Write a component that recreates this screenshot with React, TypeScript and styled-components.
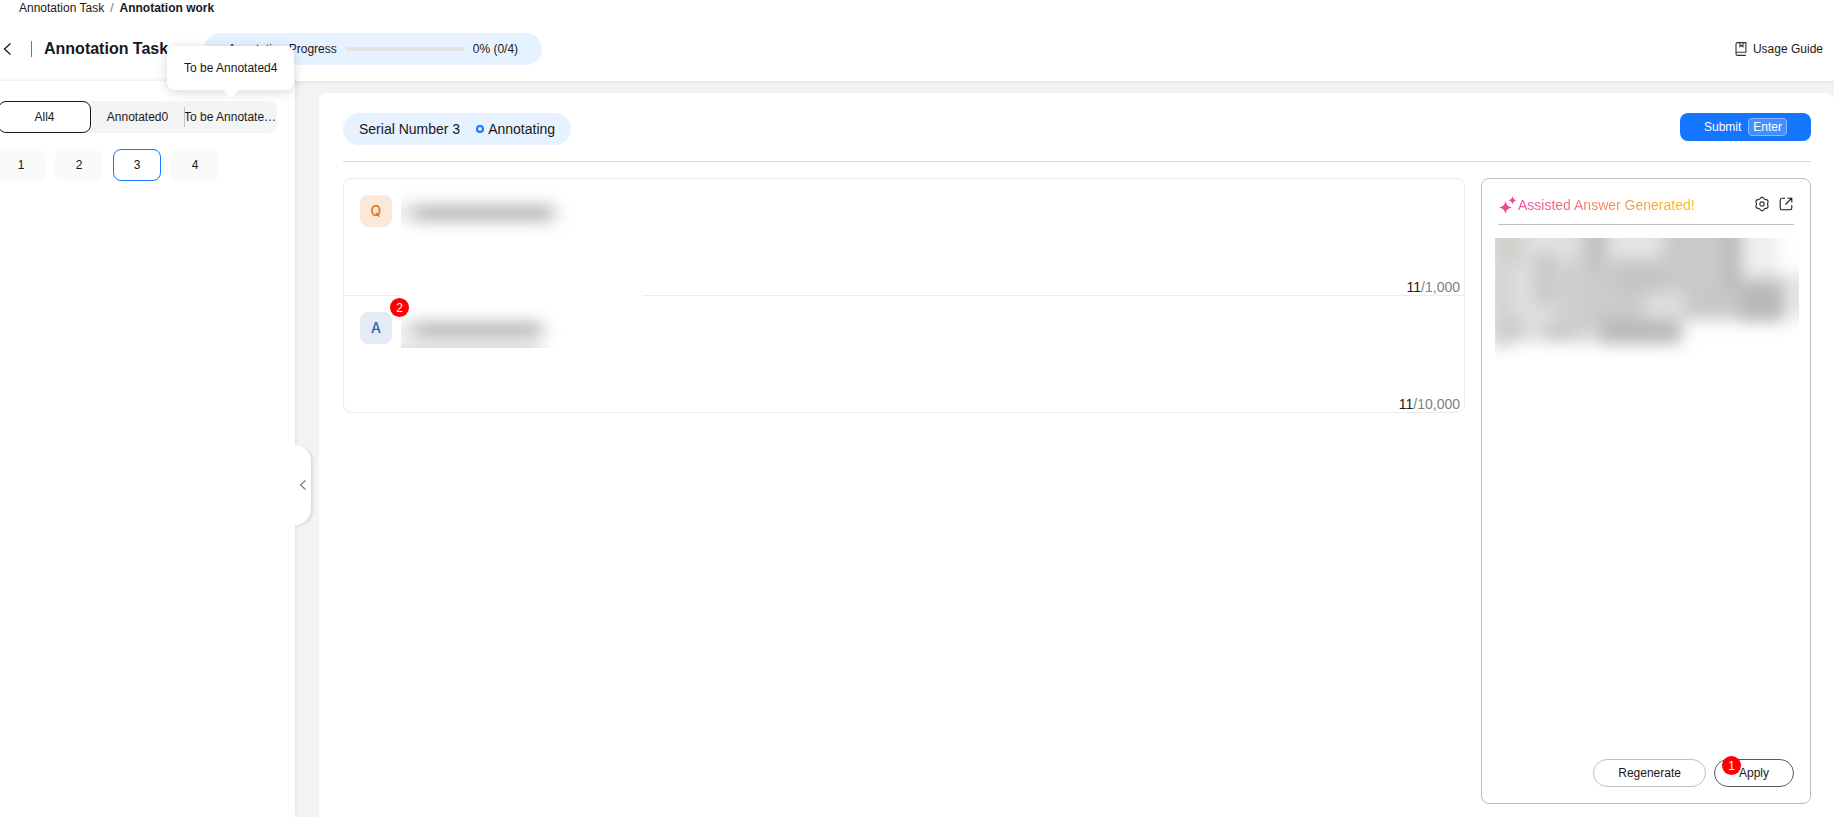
import React from "react";
import styled, { createGlobalStyle, css } from "styled-components";

const GlobalStyle = createGlobalStyle`
  *, *::before, *::after { box-sizing: border-box; }
  body {
    margin: 0;
    background: #ffffff;
    color: #191919;
    font-family: "Liberation Sans", Arial, sans-serif;
    font-size: 12px;
    line-height: 16px;
    overflow-x: hidden;
  }
  button {
    font: inherit;
    color: inherit;
    margin: 0;
    padding: 0;
    border: 0;
    background: none;
    cursor: pointer;
  }
  a { color: inherit; text-decoration: none; }
  svg { display: block; }
`;

const Page = styled.div`
  display: flex;
  flex-direction: column;
  min-height: 100vh;
`;

const Header = styled.header`
  position: relative;
  z-index: 1;
  background: #ffffff;
  box-shadow: 0 1px 5px rgba(0, 0, 0, 0.08);
  padding-bottom: 16px;
`;

const Breadcrumb = styled.nav`
  display: flex;
  gap: 6px;
  padding: 0 19px;
  margin-bottom: 17px;
`;

const Slash = styled.span`
  color: #777777;
`;

const TitleBar = styled.div`
  display: flex;
  align-items: center;
  height: 32px;
  padding: 0 11px 0 3px;
`;

const TitleDivider = styled.span`
  width: 1px;
  height: 16px;
  margin: 0 12px 0 19px;
  background: #777777;
`;

const Title = styled.h1`
  margin: 0;
  width: 160px;
  font-size: 16px;
  line-height: 24px;
`;

const Pill = styled.div<{ $large?: boolean }>`
  display: flex;
  align-items: center;
  height: 32px;
  border-radius: 16px;
  background: #e6f2ff;
  ${({ $large }) =>
    $large
      ? css`
          gap: 16px;
          padding: 0 16px;
          font-size: 14px;
        `
      : css`
          gap: 8px;
          padding: 0 24px;
        `}
`;

const Track = styled.div`
  width: 120px;
  height: 4px;
  border-radius: 2px;
  background: #e3e3e6;
  overflow: hidden;
`;

const Fill = styled.div`
  height: 100%;
  background: #1476ff;
`;

const GuideLink = styled.a`
  display: flex;
  align-items: center;
  gap: 6px;
  margin-left: auto;
`;

const Body = styled.div`
  flex: 1;
  display: flex;
  background: #f3f3f3;
`;

const Sidebar = styled.aside`
  position: relative;
  z-index: 2;
  flex: none;
  width: 295px;
  padding: 20px 18px 0 0;
  background: #ffffff;
  box-shadow: 1px 0 4px rgba(0, 0, 0, 0.08);
  clip-path: inset(-60px -20px 0 0);
  border-top: 1px solid #f4f4f4;
  margin-top: -1px;
`;

const Tabs = styled.div`
  display: grid;
  grid-template-columns: repeat(3, 93px);
  height: 32px;
  margin-left: -2px;
  border-radius: 8px;
  background: #f4f4f4;
`;

const Tab = styled.button<{ $active?: boolean }>`
  position: relative;
  display: flex;
  align-items: center;
  justify-content: center;
  min-width: 0;
  ${({ $active }) =>
    $active &&
    css`
      border: 1px solid #191919;
      border-radius: 8px;
      background: #ffffff;
    `}
  & + &:last-child::before {
    content: "";
    position: absolute;
    left: 0;
    width: 1px;
    height: 20px;
    background: #c2c2c2;
  }
`;

const TabText = styled.span`
  min-width: 0;
  overflow: hidden;
  white-space: nowrap;
  text-overflow: ellipsis;
`;

const Tooltip = styled.span`
  position: absolute;
  bottom: calc(100% + 11px);
  left: -17px;
  padding: 14px 17px;
  border-radius: 8px;
  background: #ffffff;
  box-shadow: 0 2px 12px rgba(0, 0, 0, 0.16);
  white-space: nowrap;
  &::after {
    content: "";
    position: absolute;
    top: 100%;
    left: 50%;
    margin-left: -8px;
    border: 8px solid transparent;
    border-top-color: #ffffff;
    border-bottom: 0;
  }
`;

const Numbers = styled.div`
  display: flex;
  flex-wrap: wrap;
  gap: 10px;
  margin: 16px 0 0 -3px;
`;

const NumberButton = styled.button<{ $active?: boolean }>`
  width: 48px;
  height: 32px;
  border: 1px solid ${({ $active }) => ($active ? "#1476ff" : "#fafafa")};
  border-radius: 8px;
  background: ${({ $active }) => ($active ? "#ffffff" : "#fafafa")};
`;

const CollapseHandle = styled.button`
  position: absolute;
  top: calc(50% - 4px);
  left: 100%;
  display: flex;
  align-items: center;
  justify-content: center;
  width: 16px;
  height: 80px;
  border-radius: 0 16px 16px 0;
  background: #ffffff;
  box-shadow: 2px 1px 3px rgba(0, 0, 0, 0.1);
`;

const Card = styled.main`
  flex: 1;
  min-width: 0;
  display: flex;
  flex-direction: column;
  margin: 12px 0 0 24px;
  padding: 20px 23px 13px 24px;
  border-radius: 8px 8px 0 0;
  background: #ffffff;
`;

const CardHeader = styled.div`
  display: flex;
  align-items: flex-start;
  justify-content: space-between;
  padding-bottom: 16px;
  margin-bottom: 16px;
  border-bottom: 1px solid #dadada;
`;

const Status = styled.span`
  display: flex;
  align-items: center;
  gap: 4px;
  &::before {
    content: "";
    width: 8px;
    height: 8px;
    border: 2px solid #1476ff;
    border-radius: 50%;
  }
`;

const SubmitButton = styled.button`
  display: flex;
  align-items: center;
  gap: 7px;
  height: 28px;
  padding: 0 24px;
  border-radius: 8px;
  background: #1476ff;
  color: #ffffff;
`;

const KeyHint = styled.kbd`
  padding: 0 4px;
  border: 1px solid #8abaff;
  border-radius: 4px;
  background: #438fff;
  font: inherit;
`;

const Columns = styled.div`
  flex: 1;
  display: flex;
  align-items: flex-start;
  gap: 16px;
`;

const Dialogue = styled.section`
  flex: 1;
  min-width: 0;
  border: 1px solid #ececec;
  border-radius: 8px;
`;

const Entry = styled.div`
  position: relative;
  box-sizing: content-box;
  height: 84px;
  padding: 16px;
  & + & {
    border-top: 1px solid #ececec;
  }
`;

const Speaker = styled.span<{ $answer?: boolean }>`
  display: flex;
  align-items: center;
  justify-content: center;
  width: 32px;
  height: 32px;
  border-radius: 8px;
  font-family: Inter, sans-serif;
  font-size: 14px;
  font-weight: 500;
  background: ${({ $answer }) => ($answer ? "#e4ebf6" : "#fae8d9")};
  color: ${({ $answer }) => ($answer ? "#2c5fb8" : "#e07412")};
`;

const HiddenText = styled.svg<{ $answer?: boolean }>`
  position: absolute;
  left: 57px;
  top: ${({ $answer }) => ($answer ? "-4px" : "8px")};
`;

const Counter = styled.span`
  position: absolute;
  right: 4px;
  bottom: 0;
  font-size: 14px;
  color: #808080;
  b {
    font-weight: 400;
    color: #191919;
  }
`;

const Marker = styled.span<{ $x: number; $y: number }>`
  position: absolute;
  left: ${({ $x }) => $x}px;
  top: ${({ $y }) => $y}px;
  display: flex;
  align-items: center;
  justify-content: center;
  width: 19px;
  height: 19px;
  border-radius: 50%;
  background: #ff0000;
  color: #ffffff;
`;

const Assistant = styled.section`
  align-self: stretch;
  flex: none;
  display: flex;
  flex-direction: column;
  width: 330px;
  padding: 16px;
  border: 1px solid #bdbdbd;
  border-radius: 8px;
`;

const AssistantHeader = styled.div`
  display: flex;
  align-items: center;
  height: 30px;
  padding-bottom: 11px;
  border-bottom: 1px solid #c2c2c2;
`;

const AssistantTitle = styled.h2`
  flex: 1;
  margin: 2px 0 0;
  font-size: 14px;
  line-height: 20px;
  font-weight: 400;
  span {
    background: linear-gradient(90deg, #ec4b9b, #f58a5a 50%, #fbbf0c);
    background-clip: text;
    color: transparent;
  }
`;

const IconButton = styled.button`
  margin-left: 8px;
`;

const AssistantBody = styled.div`
  flex: 1;
  margin: 13px -5px 0 -3px;
`;

const Actions = styled.div`
  display: flex;
  justify-content: flex-end;
  gap: 8px;
`;

const ActionButton = styled.button<{ $strong?: boolean }>`
  position: relative;
  height: 28px;
  padding: 0 24px;
  border: 1px solid ${({ $strong }) => ($strong ? "#595959" : "#c2c2c2")};
  border-radius: 14px;
`;

const entries = [
  { speaker: "Q", count: "11", limit: "1,000", answer: false },
  { speaker: "A", count: "11", limit: "10,000", answer: true },
];

const smudges = [
  [0, -20, 30, 46, "#cfcfcc"],
  [0, 30, 14, 80, "#d0d0ce"],
  [12, 80, 14, 24, "#c8c8c8"],
  [28, -20, 24, 34, "#e2e2e2"],
  [40, 14, 20, 52, "#c8c8c8"],
  [52, -20, 34, 36, "#e0e0e0"],
  [62, 24, 30, 80, "#cfcfcf"],
  [88, -20, 24, 48, "#c0c0c0"],
  [90, 28, 60, 60, "#cbcbcb"],
  [112, -20, 54, 38, "#e4e4e4"],
  [120, 22, 70, 32, "#c4c4c4"],
  [168, -20, 76, 74, "#c9c9c9"],
  [190, 46, 98, 36, "#c8c8c8"],
  [228, -20, 18, 70, "#bababa"],
  [246, 44, 42, 40, "#b8b8b8"],
  [248, -20, 36, 54, "#f0f0f0"],
  [104, 82, 80, 24, "#b8b8b8"],
  [50, 84, 24, 20, "#c8c8c8"],
  [292, 40, 20, 40, "#e6e7ea"],
] as const;

// Six-lobed outline of the settings gear, centred on (8, 8).
const gearPoints = Array.from({ length: 72 }, (_, i) => {
  const angle = (i * Math.PI) / 36;
  const radius = 6.1 - 0.6 * Math.cos(6 * angle);
  return `${(8 + radius * Math.cos(angle)).toFixed(2)},${(8 + radius * Math.sin(angle)).toFixed(2)}`;
}).join(" ");

function HiddenLine({ answer }: { answer: boolean }) {
  const id = answer ? "blur-answer" : "blur-question";
  const y = answer ? 31 : 19;
  return (
    <HiddenText $answer={answer} width="241" height={answer ? 56 : 50} aria-hidden="true">
      <filter id={id} x="-30%" y="-150%" width="160%" height="400%" colorInterpolationFilters="sRGB">
        <feGaussianBlur stdDeviation="9 8" />
      </filter>
      <rect width="241" height="60" fill="#ffffff" />
      <g filter={`url(#${id})`}>
        <rect x="11" y={y} width={answer ? 130 : 142} height="14" fill="#acacac" />
        <rect x="-6" y={y} width="12" height="12" fill="#dadad6" />
        {answer && <rect x="-10" y="58" width="150" height="12" fill="#b8b8b8" />}
      </g>
    </HiddenText>
  );
}

export default function App() {
  const done = 0;
  return (
    <Page>
      <GlobalStyle />
      <Header>
        <Breadcrumb aria-label="Breadcrumb">
          <a href="#tasks">Annotation Task</a>
          <Slash>/</Slash>
          <b>Annotation work</b>
        </Breadcrumb>
        <TitleBar>
          <button aria-label="Back">
            <svg width="9" height="14" fill="none" stroke="#191919" strokeWidth="1.3">
              <path d="M7.5 1.5 1.5 7l6 5.5" />
            </svg>
          </button>
          <TitleDivider />
          <Title>Annotation Task</Title>
          <Pill>
            Annotation Progress
            <Track role="progressbar" aria-valuenow={done} aria-label="Annotation Progress">
              <Fill style={{ width: `${done}%` }} />
            </Track>
            0% (0/4)
          </Pill>
          <GuideLink href="#guide">
            <svg width="12" height="14" fill="none" stroke="#333333" strokeWidth="1.1">
              <path d="M1 11.5V2.200c0-.9.6-1.600 1.500-1.600h8.400v9.700H2.200c-1.600 0-1.600 3.100 0 3.100h8.700" />
              <path d="M5 .6v4l1.500-1.100 1.500 1.100v-4" />
            </svg>
            Usage Guide
          </GuideLink>
        </TitleBar>
      </Header>

      <Body>
        <Sidebar>
          <Tabs>
            <Tab $active>All4</Tab>
            <Tab>Annotated0</Tab>
            <Tab aria-describedby="tab-tip">
              <TabText>To be Annotated4</TabText>
              <Tooltip id="tab-tip" role="tooltip">
                To be Annotated4
              </Tooltip>
            </Tab>
          </Tabs>
          <Numbers>
            {[1, 2, 3, 4].map((n) => (
              <NumberButton key={n} $active={n === 3}>
                {n}
              </NumberButton>
            ))}
          </Numbers>
          <CollapseHandle aria-label="Collapse">
            <svg width="8" height="12" fill="none" stroke="#808080" strokeWidth="1.3">
              <path d="M6.500 1.500 1.500 6l5 4.500" />
            </svg>
          </CollapseHandle>
        </Sidebar>

        <Card>
          <CardHeader>
            <Pill $large>
              <span>Serial Number 3</span>
              <Status>Annotating</Status>
            </Pill>
            <SubmitButton>
              Submit <KeyHint>Enter</KeyHint>
            </SubmitButton>
          </CardHeader>
          <Columns>
            <Dialogue>
              {entries.map((entry) => (
                <Entry key={entry.speaker}>
                  <Speaker $answer={entry.answer}>{entry.speaker}</Speaker>
                  <HiddenLine answer={entry.answer} />
                  {entry.answer && <Marker $x={46} $y={2}>2</Marker>}
                  <Counter>
                    <b>{entry.count}</b>/{entry.limit}
                  </Counter>
                </Entry>
              ))}
            </Dialogue>
            <Assistant>
              <AssistantHeader>
                <svg width="20" height="20" fill="#ec4899">
                  <path d="M7.500 7c.9 4.100 2.300 5.500 6.400 6.500-4.100 1-5.500 2.400-6.400 6.500-.9-4.100-2.300-5.500-6.400-6.500C5.200 12.500 6.600 11.100 7.500 7z" />
                  <path d="M14.500 2c.6 2.700 1.500 3.600 4.200 4.200-2.700.7-3.600 1.600-4.200 4.300-.6-2.700-1.500-3.600-4.200-4.300 2.700-.6 3.600-1.500 4.200-4.200z" />
                </svg>
                <AssistantTitle>
                  <span>Assisted Answer Generated!</span>
                </AssistantTitle>
                <IconButton aria-label="Settings">
                  <svg width="16" height="16" fill="none" stroke="#333333" strokeWidth="1.2">
                    <polygon points={gearPoints} />
                    <circle cx="8" cy="8" r="2.200" />
                  </svg>
                </IconButton>
                <IconButton aria-label="Open in new window">
                  <svg width="16" height="16" fill="none" stroke="#191919" strokeWidth="1.100">
                    <path d="M7 2.200H4c-1.200 0-1.800.8-1.800 2V12c0 1.200.6 1.800 1.800 1.800h8c1.200 0 1.800-.6 1.800-1.800V9M9.500 2.200h4.300v4.300M13.800 2.200 7.500 8.500" />
                  </svg>
                </IconButton>
              </AssistantHeader>
              <AssistantBody>
                <svg width="304" height="122" aria-hidden="true">
                  <filter id="blur-body" x="-10%" y="-20%" width="120%" height="140%" colorInterpolationFilters="sRGB">
                    <feGaussianBlur stdDeviation="8" />
                  </filter>
                  <g filter="url(#blur-body)">
                    <path d="M-20-20H284V36H320V80H190V104H-20z" fill="#dedede" />
                    {smudges.map(([x, y, w, h, fill], i) => (
                      <rect key={i} x={x} y={y} width={w} height={h} fill={fill} />
                    ))}
                  </g>
                </svg>
              </AssistantBody>
              <Actions>
                <ActionButton>Regenerate</ActionButton>
                <ActionButton $strong>
                  Apply
                  <Marker $x={7} $y={-4}>1</Marker>
                </ActionButton>
              </Actions>
            </Assistant>
          </Columns>
        </Card>
      </Body>
    </Page>
  );
}
